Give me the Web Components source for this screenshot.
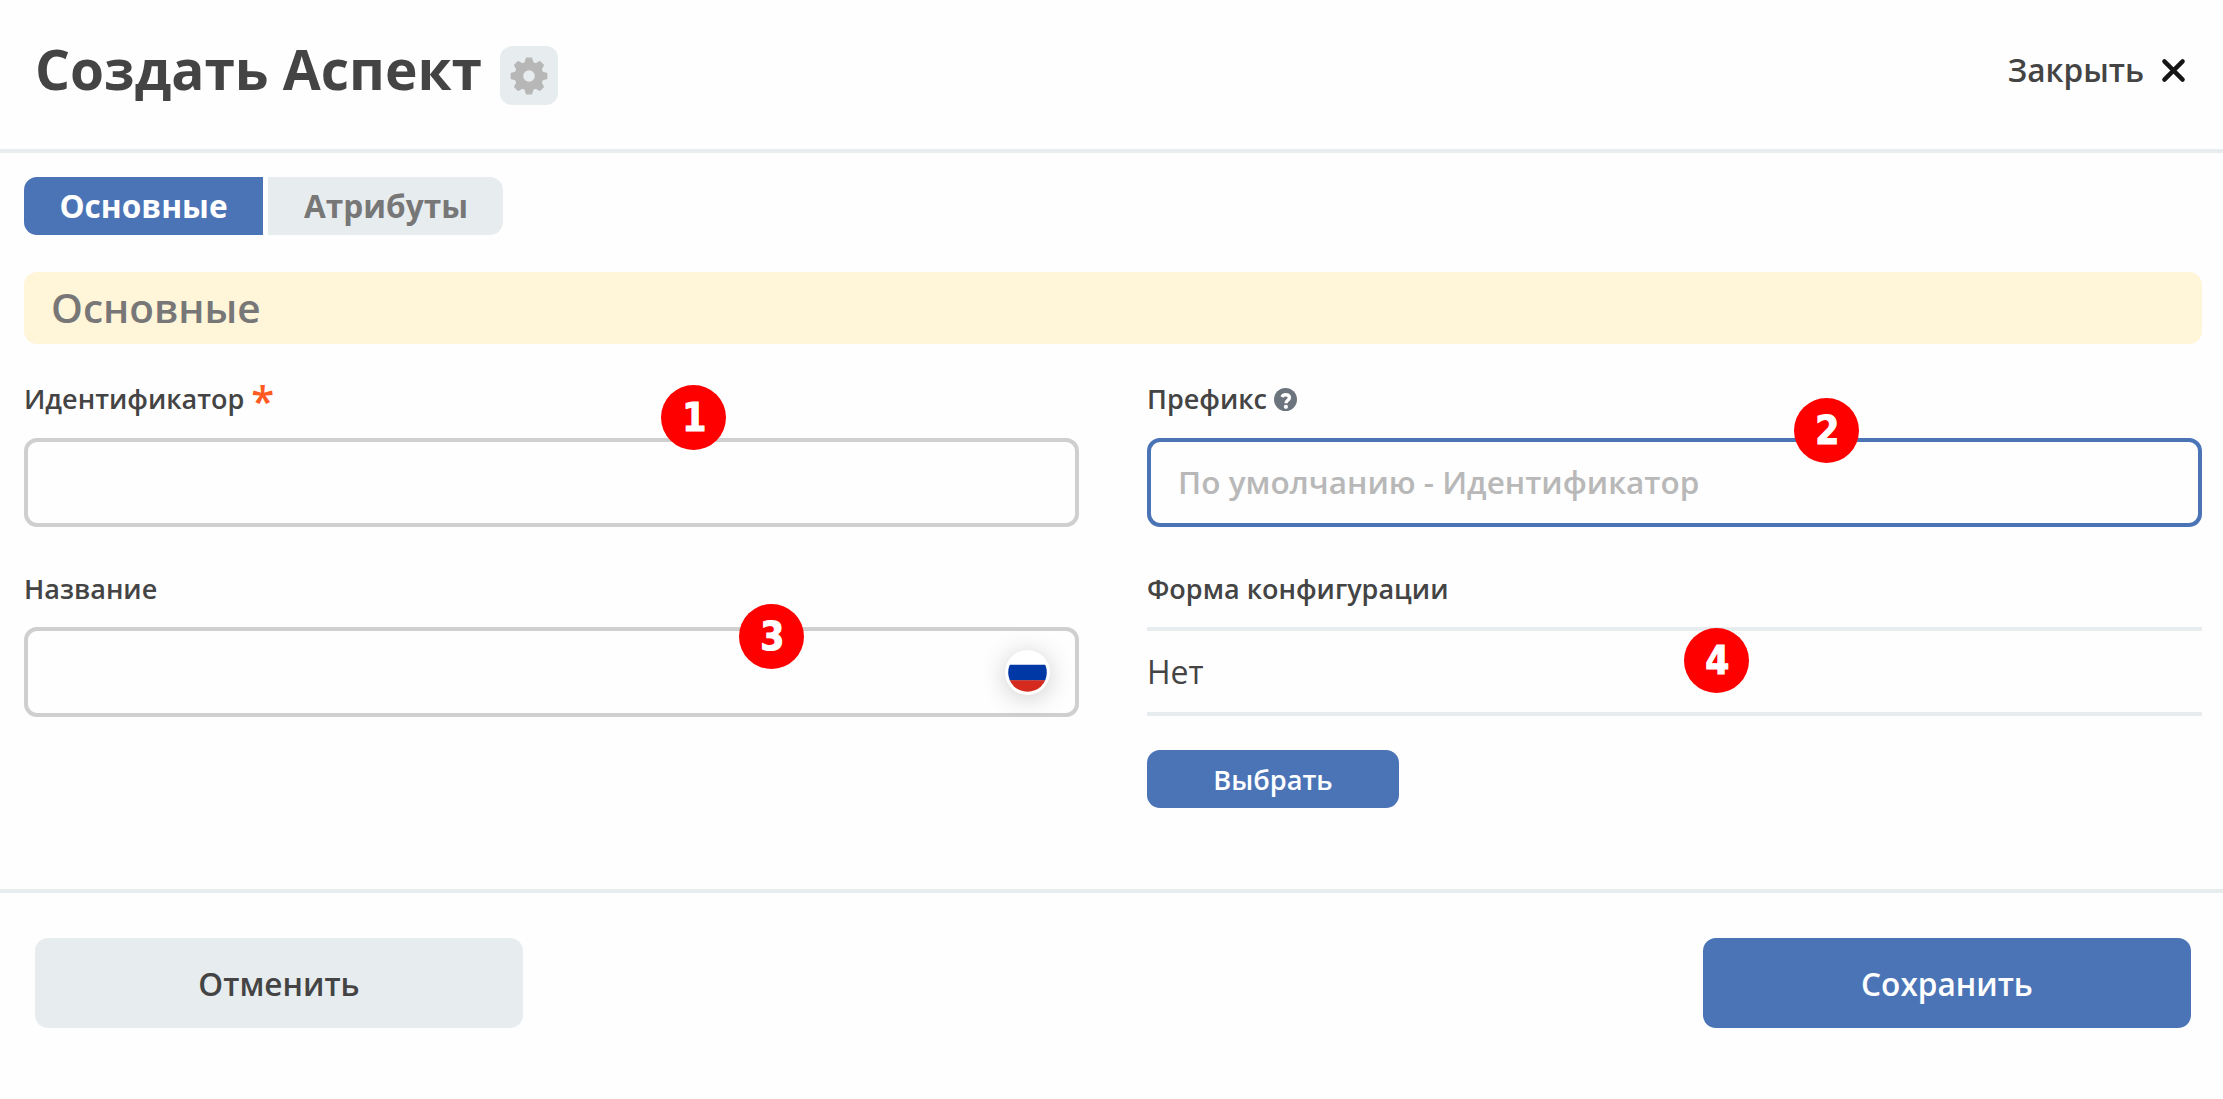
<!DOCTYPE html>
<html lang="ru">
<head>
<meta charset="utf-8">
<title>Создать Аспект</title>
<style>
  html, body { margin: 0; background: #fefefe; }
  body { font-family: "Open Sans", "Noto Sans", sans-serif; font-weight: 600; color: #444; overflow: hidden; }
</style>
</head>
<body>
<aspect-dialog></aspect-dialog>

<script>
const define = (name, html, init) => {
  const tpl = document.createElement('template');
  tpl.innerHTML = html;
  customElements.define(name, class extends HTMLElement {
    constructor() {
      super();
      this.attachShadow({ mode: 'open' }).append(tpl.content.cloneNode(true));
      if (init) init(this.shadowRoot, this);
    }
  });
};

define('gear-button', `
<style>
  :host { display: flex; width: 58px; height: 59px; border-radius: 12px; background: #e7edef; align-items: center; justify-content: center; }
  svg { display: block; width: 40px; height: 40px; }
</style>
<svg viewBox="-20 -20 40 40">
  <mask id="m"><rect x="-20" y="-20" width="40" height="40" fill="#fff"/><circle r="5.8" fill="#000"/></mask>
  <g mask="url(#m)" fill="#b7b7b7" stroke="#b7b7b7" stroke-width="2" stroke-linejoin="round"><circle r="12.6"/><g id="teeth"></g></g>
</svg>`, root => {
  const g = root.getElementById('teeth');
  for (let i = 0; i < 8; i++) {
    const p = document.createElementNS('http://www.w3.org/2000/svg', 'path');
    p.setAttribute('d', 'M-5.4-12 L-3.4-13.4 L-2.3-17.4 H2.3 L3.4-13.4 L5.4-12 Z');
    p.setAttribute('transform', `rotate(${i * 45})`);
    g.append(p);
  }
});

define('close-link', `
<style>
  :host { display: flex; align-items: center; gap: 17px; font-size: 31.6px; line-height: 44px; }
  svg { display: block; width: 25px; height: 25px; }
</style>
<slot></slot>
<svg viewBox="0 0 25 25"><path d="M3.4 3.4 21.6 21.6M21.6 3.4 3.4 21.6" stroke="#151515" stroke-width="4.4" stroke-linecap="round"/></svg>`);

define('help-icon', `
<style>:host { display: block; width: 23px; height: 23px; } svg { display: block; }</style>
<svg width="23" height="23" viewBox="0 0 23 23"><circle cx="11.5" cy="11.5" r="11.5" fill="#6c757d"/>
<path d="M8 9.1C8.9 7.3 10 6.8 11.6 6.8 13.8 6.8 15.4 7.9 15.4 9.8 15.4 12.3 12 12.2 12 15.2" fill="none" stroke="#fff" stroke-width="3.4"/><circle cx="11.9" cy="18.8" r="2.1" fill="#fff"/></svg>`);

define('tab-bar', `
<style>:host { display: flex; gap: 5px; height: 58px; }</style><slot></slot>`);

define('tab-item', `
<style>
  :host { display: flex; align-items: center; justify-content: center; box-sizing: border-box; width: 235px; padding-left: 1px; background: #e7edef; color: #777; font-weight: 700; font-size: 31.6px; line-height: 44px; border-radius: 0 13px 13px 0; }
  :host([active]) { width: 239px; padding: 0; background: #4b74b7; color: #fff; border-radius: 13px 0 0 13px; }
</style><slot></slot>`);

define('section-title', `
<style>:host { display: block; box-sizing: border-box; height: 72px; padding-left: 27px; border-radius: 13px; background: #fff5d9; color: #777; font-size: 40.5px; line-height: 71px; }</style><slot></slot>`);

define('form-field', `
<style>
  :host { display: flex; flex-direction: column; }
  .label { display: flex; align-items: center; height: 38px; font-size: 27px; line-height: 38px; }
  .req { display: none; color: #ff5a22; font-size: 42px; font-weight: 600; margin-left: 7px; height: 38px; line-height: 40px; }
  :host([required]) .req { display: block; }
  .body { margin-top: var(--gap, 20px); display: flex; flex-direction: column; }
</style>
<div class="label"><slot name="label"></slot><span class="req">*</span></div>
<div class="body"><slot></slot></div>`);

define('text-box', `
<style>
  :host { display: flex; align-items: center; box-sizing: border-box; height: 89px; padding: 0 25px 2px 27px; border: 4px solid #cfcfcf; border-radius: 13px; color: #b8b8b8; font-size: 31.53px; line-height: 44px; }
  :host([focused]) { border-color: #4b74b7; }
  :host([tall]) { height: 90px; padding-bottom: 0; }
</style><slot></slot>`);

define('flag-badge', `
<style>
  :host { display: block; width: 45px; height: 45px; margin-left: auto; border-radius: 50%; background: #fff; box-shadow: 0 3px 26px rgba(0,0,0,.2); }
  svg { display: block; }
</style>
<svg width="45" height="45" viewBox="0 0 45 45"><clipPath id="c"><circle cx="22.5" cy="22.5" r="19.3"/></clipPath>
<g clip-path="url(#c)"><path fill="#fff" d="M0 0h45v15H0z"/><path fill="#0039a6" d="M0 14.8h45v15.6H0z"/><path fill="#d52b1e" d="M0 30.3h45v15H0z"/></g></svg>`);

define('read-value', `
<style>:host { display: block; height: 81px; border: solid #e7edef; border-width: 4px 0; font-weight: 400; font-size: 32px; line-height: 82px; }</style><slot></slot>`);

define('ui-button', `
<style>
  :host { display: flex; align-items: center; justify-content: center; box-sizing: border-box; width: 488px; height: 90px; padding-top: 2px; border-radius: 13px; background: #e7edef; font-size: 31.6px; line-height: 44px; }
  :host([primary]) { background: #4b74b7; color: #fff; }
  :host([small]) { width: 252px; height: 58px; margin-top: 34px; font-size: 27.2px; line-height: 38px; }
</style><slot></slot>`);

define('step-marker', `
<style>
  :host { position: absolute; left: calc(var(--x) * 1px); top: calc(var(--y) * 1px); width: 65px; height: 65px; margin: -32.6px 0 0 -32.6px; border-radius: 50%; background: #f00; color: #fff; text-align: center; text-indent: 1px; font: 700 38.5px/65px "DejaVu Sans Condensed", "DejaVu Sans", sans-serif; font-stretch: condensed; -webkit-text-stroke: 1px #fff; }
</style><slot></slot>`);

define('aspect-dialog', `
<style>
  :host { display: flex; flex-direction: column; position: relative; width: 2223px; height: 1099px; }
  header { display: flex; justify-content: space-between; box-sizing: border-box; height: 153px; padding: 0 37px 0 35px; border-bottom: 4px solid #e7edef; }
  .heading { display: flex; gap: 18px; padding-top: 31px; }
  h1 { margin: 0; font-size: 55px; font-weight: 700; line-height: 75px; white-space: nowrap; }
  gear-button { margin-top: 15px; }
  close-link { height: 44px; margin-top: 48px; }
  main { display: flex; flex-direction: column; height: 736px; box-sizing: border-box; padding: 24px 21px 0 24px; }
  section-title { margin-top: 37px; }
  .fields { display: grid; grid-template-columns: 1055px 1055px; column-gap: 68px; padding-top: 36px; }
  .col { display: flex; flex-direction: column; gap: 43px; }
  .short { --gap: 19px; }
  help-icon { margin-top: 1px; }
  .q { display: flex; align-items: center; gap: 7px; }
  footer { display: flex; justify-content: space-between; border-top: 4px solid #e7edef; padding: 45px 32px 0 35px; }
</style>
<header>
  <div class="heading"><h1>Создать Аспект</h1><gear-button></gear-button></div>
  <close-link>Закрыть</close-link>
</header>
<main>
  <tab-bar><tab-item active>Основные</tab-item><tab-item>Атрибуты</tab-item></tab-bar>
  <section-title>Основные</section-title>
  <div class="fields">
    <div class="col">
      <form-field required><span slot="label">Идентификатор</span><text-box></text-box></form-field>
      <form-field class="short"><span slot="label">Название</span><text-box tall><flag-badge></flag-badge></text-box></form-field>
    </div>
    <div class="col">
      <form-field><span slot="label" class="q">Префикс<help-icon></help-icon></span><text-box focused>По умолчанию - Идентификатор</text-box></form-field>
      <form-field class="short"><span slot="label">Форма конфигурации</span><read-value>Нет</read-value><ui-button primary small>Выбрать</ui-button></form-field>
    </div>
  </div>
</main>
<footer><ui-button>Отменить</ui-button><ui-button primary>Сохранить</ui-button></footer>
<step-marker style="--x:694;--y:418">1</step-marker>
<step-marker style="--x:1827;--y:431">2</step-marker>
<step-marker style="--x:772;--y:637">3</step-marker>
<step-marker style="--x:1717;--y:661">4</step-marker>`);
</script>
</body>
</html>
